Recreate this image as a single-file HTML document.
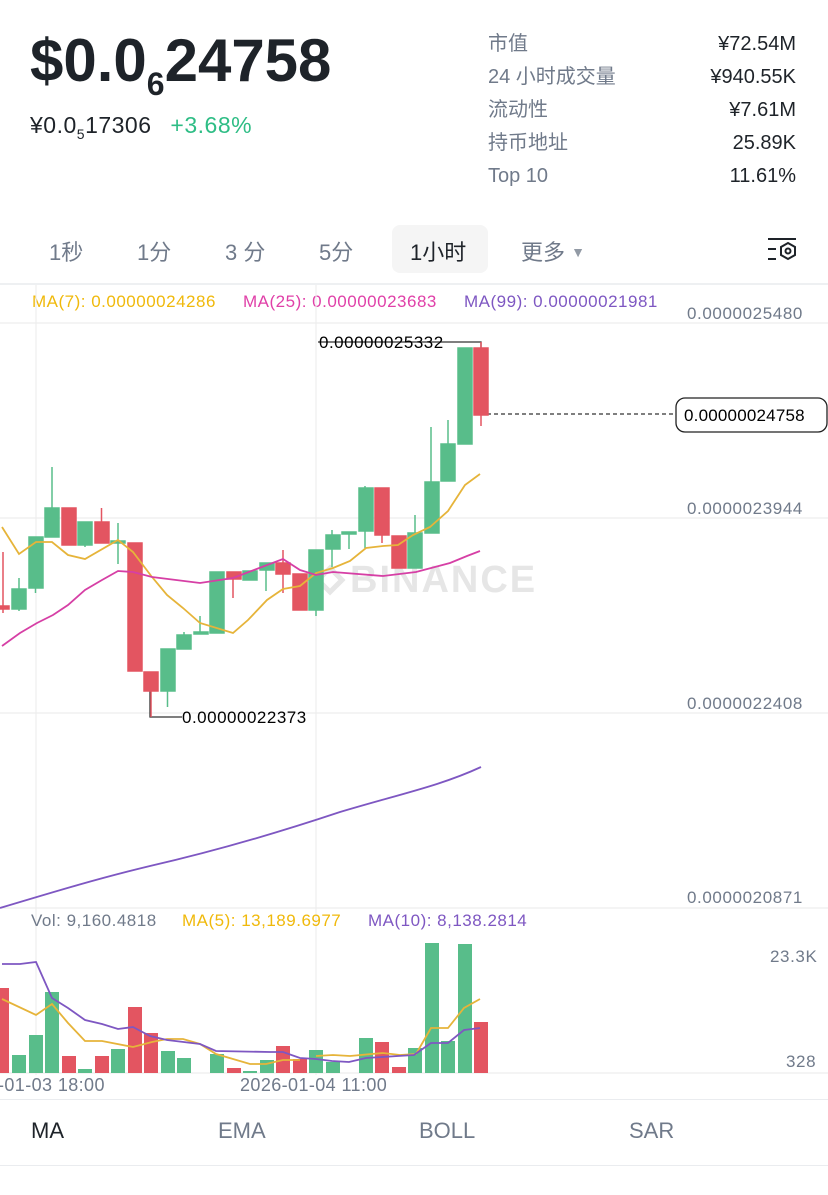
<!DOCTYPE html>
<html><head><meta charset="utf-8"><style>
*{margin:0;padding:0;box-sizing:border-box}
body{width:828px;height:1195px;background:#fff;font-family:"Liberation Sans","Noto Sans CJK SC",sans-serif;position:relative;overflow:hidden;color:#1e2329}
.a{position:absolute;white-space:nowrap}
.g{color:#707a8a}
.m{font-size:17px;letter-spacing:0.5px}
</style></head><body>
<div class="a" style="left:30px;top:26px;font-size:60px;font-weight:bold;letter-spacing:0px">$0.0<span style="font-size:32px;position:relative;top:14px">6</span>24758</div>
<div class="a" style="left:30px;top:112px;font-size:23px;letter-spacing:0.5px">¥0.0<span style="font-size:14px;position:relative;top:6px">5</span>17306 <span style="color:#2ebd85;margin-left:12px">+3.68%</span></div>
<div class="a g" style="left:488px;top:28px;font-size:20px;line-height:33px">市值<br>24 小时成交量<br>流动性<br>持币地址<br>Top 10</div>
<div class="a" style="right:32px;top:28px;font-size:20px;line-height:33px;text-align:right">¥72.54M<br>¥940.55K<br>¥7.61M<br>25.89K<br>11.61%</div>
<div class="a" style="left:392px;top:225px;width:96px;height:48px;background:#f5f5f5;border-radius:8px"></div>
<div class="a g" style="left:49px;top:235px;font-size:22px">1秒</div>
<div class="a g" style="left:137px;top:235px;font-size:22px">1分</div>
<div class="a g" style="left:225px;top:235px;font-size:22px">3 分</div>
<div class="a g" style="left:319px;top:235px;font-size:22px">5分</div>
<div class="a" style="left:410px;top:235px;font-size:22px">1小时</div>
<div class="a g" style="left:521px;top:235px;font-size:22px">更多 <span style="font-size:14px;position:relative;top:-3px;color:#929aa5">▼</span></div>
<svg class="a" style="left:766px;top:237px" width="32" height="26" viewBox="0 0 32 26"><g stroke="#1e2329" stroke-width="2" fill="none"><path d="M2 2H30M2 12H10M2 22H10"/><path d="M22 6l7 4v8l-7 4-7-4v-8z"/><circle cx="22" cy="14" r="2.5"/></g></svg>
<div class="a" style="left:0;top:283px;width:828px;height:2px;background:#eef0f2"></div>
<div class="a m" style="left:32px;top:292px;color:#f0b90b">MA(7): 0.00000024286</div>
<div class="a m" style="left:243px;top:292px;color:#e040a8">MA(25): 0.00000023683</div>
<div class="a m" style="left:464px;top:292px;color:#7e57c2">MA(99): 0.00000021981</div>
<svg class="a" style="left:0;top:0" width="828" height="1195">
<g stroke="#eeeeee" stroke-width="1.2"><path d="M0 323H828M0 518H828M0 713H828M0 908H828M0 1073H828M36 285V1075M316 285V1075"/></g>
<g font-family="Liberation Sans,sans-serif" font-size="17" letter-spacing="0.6" fill="#707a8a"><text x="687" y="319">0.0000025480</text><text x="687" y="514">0.0000023944</text><text x="687" y="709">0.0000022408</text><text x="687" y="903">0.0000020871</text><text x="770" y="962">23.3K</text><text x="786" y="1067">328</text></g>
<text x="350" y="592" font-family="Liberation Sans,sans-serif" font-size="38" font-weight="bold" fill="#e6e6e6" letter-spacing="2">BINANCE</text>
<path d="M318 580l12-12 12 12-12 12z" fill="none" stroke="#e6e6e6" stroke-width="5"/>
<path d="M318 342H481V348M150 690V717H182" stroke="#333" fill="none" stroke-width="1.3"/>
<path d="M487 414H676" stroke="#333" stroke-dasharray="4 3" fill="none" stroke-width="1.3"/>
<g font-family="Liberation Sans,sans-serif" font-size="17" letter-spacing="0.5" fill="#000">
<text x="319" y="348">0.00000025332</text>
<text x="182" y="723">0.00000022373</text>
</g>
<rect x="676" y="398" width="151" height="34" rx="9" fill="#fff" stroke="#222" stroke-width="1.3"/>
<text x="684" y="421" font-family="Liberation Sans,sans-serif" font-size="17" letter-spacing="0.2" fill="#000">0.00000024758</text>
</svg>
<div class="a g m" style="left:31px;top:911px">Vol: 9,160.4818</div>
<div class="a m" style="left:182px;top:911px;color:#f0b90b">MA(5): 13,189.6977</div>
<div class="a m" style="left:368px;top:911px;color:#7e57c2">MA(10): 8,138.2814</div>
<div class="a g" style="left:-2px;top:1075px;font-size:18px;letter-spacing:0.4px">-01-03 18:00</div>
<div class="a g" style="left:240px;top:1075px;font-size:18px;letter-spacing:0.4px">2026-01-04 11:00</div>
<div class="a" style="left:0;top:1099px;width:828px;height:1px;background:#eaecef"></div>
<div class="a" style="left:0;top:1165px;width:828px;height:1px;background:#eaecef"></div>
<div class="a" style="left:31px;top:1118px;font-size:22px">MA</div>
<div class="a g" style="left:218px;top:1118px;font-size:22px">EMA</div>
<div class="a g" style="left:419px;top:1118px;font-size:22px">BOLL</div>
<div class="a g" style="left:629px;top:1118px;font-size:22px">SAR</div>
<svg class="a" style="left:0;top:0" width="828" height="1195">
<g stroke-width="1.5">
<g fill="#58bd8a" stroke="#58bd8a">
<path d="M19 578V611M35.5 537V593M52 467V537M85 522V547M118 523V564M167.5 649V707M184 632V649M200 616V634M217 572V633M250 571V580M266 563V591M316 550V616M332 530V567M349 532V549M365 486V548M415 515V568M431 427V533M448 420V481M464 348V444"/>
<rect x="12" y="589" width="14" height="20"/><rect x="29" y="537" width="14" height="51"/><rect x="45" y="508" width="14" height="29"/><rect x="78" y="522" width="14" height="23"/><rect x="111" y="541" width="14" height="2"/><rect x="161" y="649" width="14" height="42"/><rect x="177" y="635" width="14" height="14"/><rect x="194" y="632" width="14" height="2"/><rect x="210" y="572" width="14" height="61"/><rect x="243" y="571" width="14" height="9"/><rect x="260" y="563" width="14" height="7"/><rect x="309" y="550" width="14" height="60"/><rect x="326" y="535" width="14" height="14"/><rect x="342" y="532" width="14" height="2"/><rect x="359" y="488" width="14" height="43"/><rect x="408" y="533" width="14" height="35"/><rect x="425" y="482" width="14" height="51"/><rect x="441" y="444" width="14" height="37"/><rect x="458" y="348" width="14" height="96"/>
</g>
<g fill="#e35561" stroke="#e35561">
<path d="M3 552V613M101.5 508V543M151 672V717M233 572V598M283 550V593M382 488V543M481 342V426"/>
<rect x="-4" y="606" width="13" height="3"/><rect x="62" y="508" width="14" height="37"/><rect x="95" y="522" width="14" height="21"/><rect x="128" y="543" width="14" height="128"/><rect x="144" y="672" width="14" height="19"/><rect x="227" y="572" width="14" height="7"/><rect x="276" y="563" width="14" height="11"/><rect x="293" y="574" width="14" height="36"/><rect x="375" y="488" width="14" height="47"/><rect x="392" y="536" width="14" height="32"/><rect x="474" y="348" width="14" height="67"/>
</g>
</g>
<g fill="none" stroke-width="1.8">
<path stroke="#e6b43a" d="M2 527L19 554L36 542L52 542L68 555L85 559L118 540L133 552L152 577L167 595L183 608L200 623L233 633L248 620L267 600L283 589L300 586L316 573L333 568L350 561L366 548L383 546L398 545L413 535L430 527L448 511L465 485L480 474"/>
<path stroke="#d63fa5" d="M2 646L20 633L37 623L53 615L68 605L85 590L102 580L118 571L133 572L152 577L200 583L233 578L283 559L300 570L316 575L333 572L383 576L416 572L450 563L467 556L480 551"/>
<path stroke="#7e57c2" d="M0 908C60 890 100 878 150 866C220 850 280 832 340 812C400 794 440 786 481 767"/>
</g>
<g>
<g fill="#58bd8a"><rect x="12" y="1055" width="14" height="18"/><rect x="29" y="1035" width="14" height="38"/><rect x="45" y="992" width="14" height="81"/><rect x="78" y="1069" width="14" height="4"/><rect x="111" y="1049" width="14" height="24"/><rect x="161" y="1051" width="14" height="22"/><rect x="177" y="1058" width="14" height="15"/><rect x="210" y="1054" width="14" height="19"/><rect x="243" y="1071" width="14" height="2"/><rect x="260" y="1060" width="14" height="13"/><rect x="309" y="1050" width="14" height="23"/><rect x="326" y="1062" width="14" height="11"/><rect x="359" y="1038" width="14" height="35"/><rect x="408" y="1048" width="14" height="25"/><rect x="425" y="943" width="14" height="130"/><rect x="441" y="1041" width="14" height="32"/><rect x="458" y="944" width="14" height="129"/></g>
<g fill="#e35561"><rect x="-4" y="988" width="13" height="85"/><rect x="62" y="1056" width="14" height="17"/><rect x="95" y="1056" width="14" height="17"/><rect x="128" y="1007" width="14" height="66"/><rect x="144" y="1033" width="14" height="40"/><rect x="227" y="1068" width="14" height="5"/><rect x="276" y="1046" width="14" height="27"/><rect x="293" y="1059" width="14" height="14"/><rect x="375" y="1042" width="14" height="31"/><rect x="392" y="1067" width="14" height="6"/><rect x="474" y="1022" width="14" height="51"/></g>
<g fill="none" stroke-width="1.8">
<path stroke="#e6b43a" d="M2 999L36 1015L52 1004L68 1023L85 1041L102 1041L133 1047L152 1042L167 1039L183 1039L200 1044L216 1054L250 1064L266 1064L283 1060L300 1060M316 1056L333 1055L350 1056L383 1053L400 1055L416 1054L431 1028L448 1028L464 1008L480 999"/>
<path stroke="#7e57c2" d="M2 964L20 964L36 962L52 998L68 1008L85 1020L102 1024L118 1029L133 1027L150 1036L167 1040L200 1044L216 1051L270 1052L283 1052L300 1058L316 1059L332 1061L349 1062L366 1058L398 1056L414 1055L431 1043L448 1043L464 1030L480 1028"/>
</g>
</g>
</svg>
</body></html>
